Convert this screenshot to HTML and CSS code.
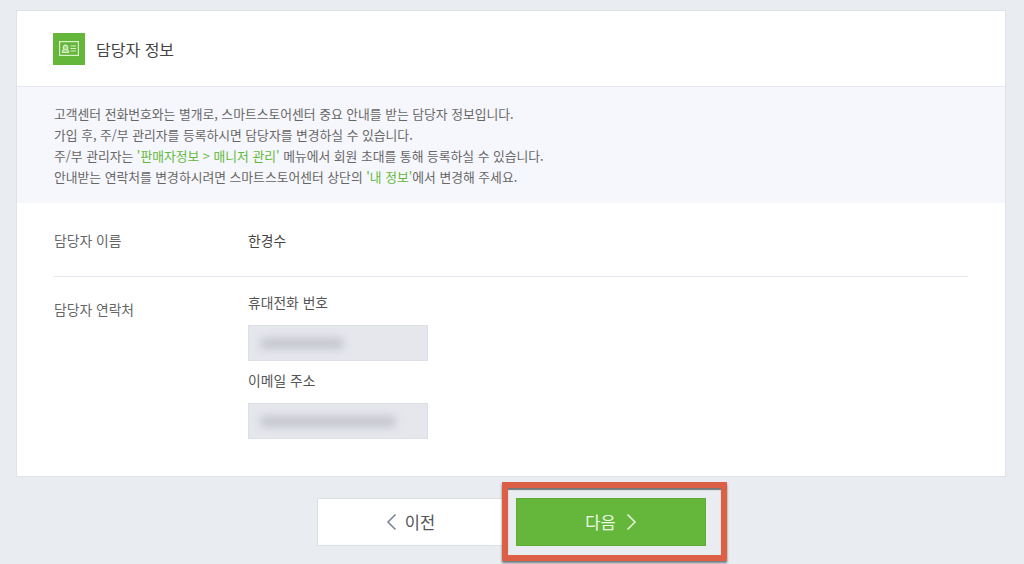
FILE: index.html
```html
<!DOCTYPE html>
<html lang="ko">
<head>
  <meta charset="UTF-8">
  <meta name="viewport" content="width=device-width, initial-scale=1.0">
  <title>담당자 정보</title>
  <link rel="stylesheet" href="styles.css">
</head>
<body>

  <div class="card">
    <!-- Header -->
    <div class="card-header">
      <span class="header-icon">
        <svg width="20" height="15" viewBox="0 0 20 15" fill="none" stroke="#d8efc8" stroke-width="1.2">
          <rect x="0.6" y="0.6" width="18.8" height="13.8"/>
          <path d="M3.5 11.5v-1.7l1.9-1.3a2.3 2.3 0 1 1 2.2 0l1.9 1.3v1.7z" fill="#d8efc8" fill-opacity="0.5"/>
          <path d="M11.5 5h5.5M11.5 7.5h5.5M11.5 10h5.5"/>
        </svg>
      </span>
      <h2>담당자 정보</h2>
    </div>

    <!-- Notice -->
    <div class="notice">
      <p>고객센터 전화번호와는 별개로, 스마트스토어센터 중요 안내를 받는 담당자 정보입니다.</p>
      <p>가입 후, 주/부 관리자를 등록하시면 담당자를 변경하실 수 있습니다.</p>
      <p>주/부 관리자는 <em>'판매자정보 &gt; 매니저 관리'</em> 메뉴에서 회원 초대를 통해 등록하실 수 있습니다.</p>
      <p>안내받는 연락처를 변경하시려면 스마트스토어센터 상단의 <em>'내 정보'</em>에서 변경해 주세요.</p>
    </div>

    <!-- Form rows -->
    <div class="rows">
      <div class="row row-name">
        <div class="row-label">담당자 이름</div>
        <div class="row-value">한경수</div>
      </div>
      <div class="row row-contact">
        <div class="row-label">담당자 연락처</div>
        <div class="row-value">
          <div class="field-label">휴대전화 번호</div>
          <div class="field"><span class="smear smear-phone"></span></div>
          <div class="field-label field-label-next">이메일 주소</div>
          <div class="field"><span class="smear smear-email"></span></div>
        </div>
      </div>
    </div>
  </div>

  <!-- Buttons -->
  <div class="actions">
    <a href="#" class="button button-prev">
      <svg width="11" height="18" viewBox="0 0 11 18" fill="none" stroke="#7d8798" stroke-width="1.6"><path d="M9.5 1.5L2 9l7.5 7.5"/></svg>
      이전
    </a>
    <div class="next-wrap">
      <span class="highlight"></span>
      <a href="#" class="button button-next">
        다음
        <svg width="11" height="18" viewBox="0 0 11 18" fill="none" stroke="#e6f3dc" stroke-width="1.6"><path d="M1.5 1.5L9 9l-7.5 7.5"/></svg>
      </a>
    </div>
  </div>

</body>
</html>
```

FILE: styles.css
```css
/* Basic Styles */
html, body {
  height: 100%;
}

body {
  font-family: "Noto Sans CJK KR", "Noto Sans", sans-serif;
  margin: 0;
  padding: 10px 18px 0 16px;
  box-sizing: border-box;
  overflow: hidden;
  background-color: #e9ecf1;
  color: #444;
}

/* Card */
.card {
  background-color: #fff;
  border: 1px solid #dfe2e8;
  height: 467px;
  box-sizing: border-box;
}

.card-header {
  display: flex;
  align-items: center;
  gap: 11px;
  height: 75px;
  padding-left: 36px;
  border-bottom: 1px solid #e4e7ed;
}

.header-icon {
  width: 32px;
  height: 32px;
  background-color: #64b73b;
  display: flex;
  align-items: center;
  justify-content: center;
}

.card-header h2 {
  margin: 0;
  font-size: 16px;
  font-weight: 400;
  color: #444;
}

/* Notice */
.notice {
  background-color: #f6f7fc;
  height: 116px;
  padding: 16px 0 0 37px;
  box-sizing: border-box;
  font-size: 12.8px;
  line-height: 21px;
  color: #666;
}

.notice p {
  margin: 0;
}

.notice em {
  font-style: normal;
  color: #64b73b;
}

/* Form rows */
.rows {
  padding: 0 37px;
}

.row {
  display: flex;
  font-size: 13.8px;
}

.row-label {
  width: 194px;
  color: #666;
}

.row-name {
  height: 73px;
  align-items: center;
  border-bottom: 1px solid #e4e7ed;
}

.row-name .row-value {
  color: #444;
}

.row-contact {
  padding-top: 14px;
}

.row-contact .row-label {
  padding-top: 8px;
}

.field-label {
  line-height: 22px;
  color: #555;
}

.field-label-next {
  margin-top: 8px;
}

.field {
  width: 180px;
  height: 36px;
  margin-top: 12px;
  background-color: #e5e7ed;
  border: 1px solid #dcdfe5;
  box-sizing: border-box;
  display: flex;
  align-items: center;
  overflow: hidden;
}

.smear {
  display: block;
  height: 11px;
  margin-left: 11px;
  background-color: #c4c6cc;
  border-radius: 6px;
  filter: blur(4px);
}

.smear-phone {
  width: 84px;
}

.smear-email {
  width: 136px;
}

/* Buttons */
.actions {
  display: flex;
  justify-content: center;
  gap: 9px;
  margin: 21px 0 0 0;
  padding-left: 1px;
}

.button {
  display: flex;
  align-items: center;
  justify-content: center;
  gap: 8px;
  width: 190px;
  height: 48px;
  box-sizing: border-box;
  font-size: 16.5px;
  text-decoration: none;
}

.button-prev {
  background-color: #fff;
  border: 1px solid #dcdfe5;
  color: #555;
  padding-right: 3px;
}

.button-next {
  background-color: #64b73b;
  border: 1px solid #5ead37;
  color: #eef7e8;
  gap: 10px;
}

.next-wrap {
  position: relative;
  z-index: 0;
}

/* Red annotation box drawn over the screenshot */
.highlight {
  position: absolute;
  z-index: -1;
  left: -14px;
  right: -21px;
  top: -16px;
  bottom: -15px;
  background-color: #e9ecf1;
  border: 6px solid #dc6046;
  box-shadow: 0 2px 2px rgba(40, 40, 40, 0.6), inset 0 2px 1px rgba(40, 40, 40, 0.6);
}
```
